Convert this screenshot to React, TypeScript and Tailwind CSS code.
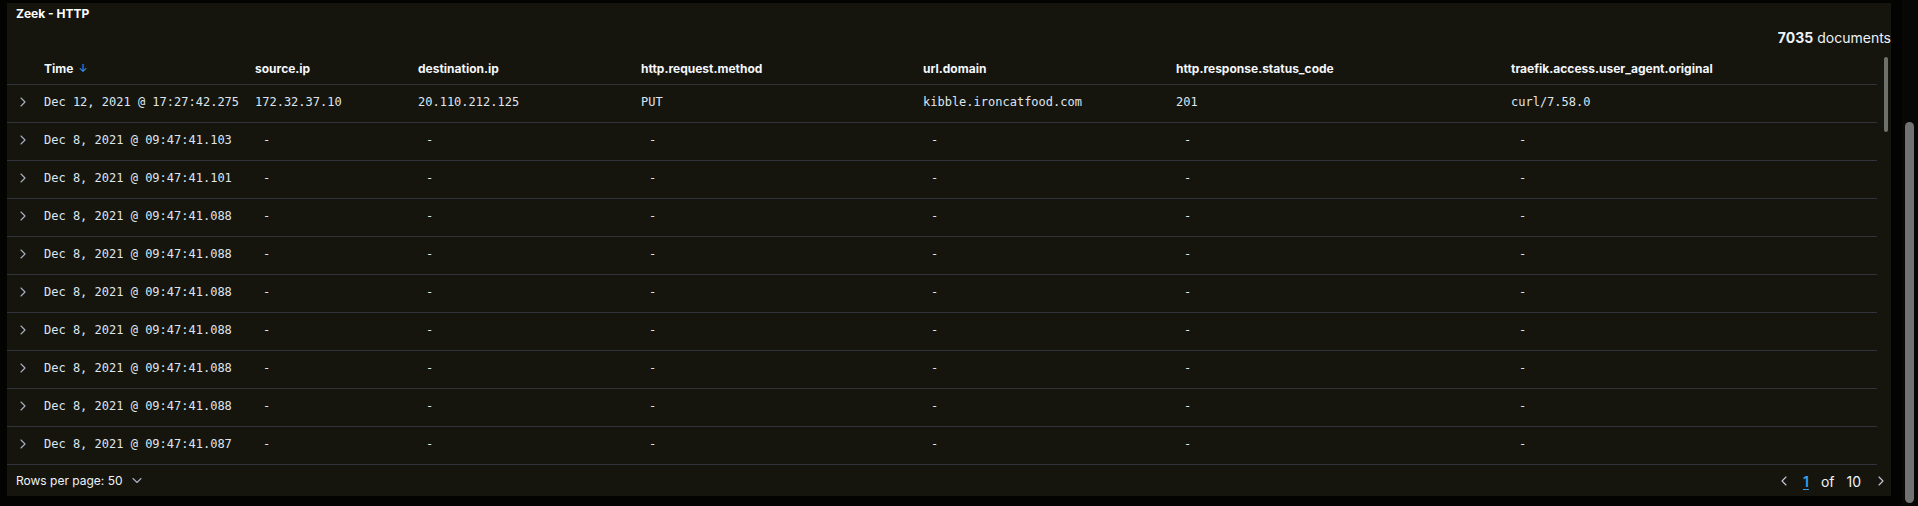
import React from "react";

const cols = [
  "w-[37px]",
  "w-[211px]",
  "w-[163px]",
  "w-[223px]",
  "w-[282px]",
  "w-[253px]",
  "w-[335px]",
  "w-[366px]",
];

const headers = [
  "source.ip",
  "destination.ip",
  "http.request.method",
  "url.domain",
  "http.response.status_code",
  "traefik.access.user_agent.original",
];

const rows: { time: string; vals: string[] | null }[] = [
  {
    time: "Dec 12, 2021 @ 17:27:42.275",
    vals: ["172.32.37.10", "20.110.212.125", "PUT", "kibble.ironcatfood.com", "201", "curl/7.58.0"],
  },
  { time: "Dec 8, 2021 @ 09:47:41.103", vals: null },
  { time: "Dec 8, 2021 @ 09:47:41.101", vals: null },
  { time: "Dec 8, 2021 @ 09:47:41.088", vals: null },
  { time: "Dec 8, 2021 @ 09:47:41.088", vals: null },
  { time: "Dec 8, 2021 @ 09:47:41.088", vals: null },
  { time: "Dec 8, 2021 @ 09:47:41.088", vals: null },
  { time: "Dec 8, 2021 @ 09:47:41.088", vals: null },
  { time: "Dec 8, 2021 @ 09:47:41.088", vals: null },
  { time: "Dec 8, 2021 @ 09:47:41.087", vals: null },
];

const Chevron = ({ dir }: { dir: "right" | "left" | "down" }) => {
  const d =
    dir === "right" ? "M2 1 L6 5 L2 9" : dir === "left" ? "M6 1 L2 5 L6 9" : "M1 2.5 L5 6.5 L9 2.5";
  return (
    <svg width={dir === "down" ? 10 : 8} height={10} viewBox={dir === "down" ? "0 0 10 10" : "0 0 8 10"} fill="none">
      <path d={d} stroke="currentColor" strokeWidth="1.1" strokeLinecap="round" strokeLinejoin="round" />
    </svg>
  );
};

export default function App() {
  const mono = { fontFamily: '"DejaVu Sans Mono", "Liberation Mono", monospace' };
  return (
    <div
      className="flex h-[506px] w-[1918px] overflow-hidden bg-[#030302] text-[#dfe5ef]"
      style={{ fontFamily: 'Inter, "Noto Sans", sans-serif' }}
    >
      <div className="w-[7px] shrink-0" />
      <div className="mt-[3px] flex h-[493px] w-[1884px] shrink-0 flex-col bg-[#15150e]">
        <div className="flex h-[22px] items-center px-[9px] text-[12px] font-bold text-white">Zeek - HTTP</div>
        <div className="flex h-[24px] items-center justify-end text-[14px] text-[#eef2f7]">
          <span className="font-bold">7035</span>
          <span className="ml-[4px]">documents</span>
        </div>
        <div className="relative h-[417px] overflow-hidden">
          <div className="w-[1870px]">
            <div className="flex h-[36px] items-center border-b border-[#31343d] pt-[4px] text-[12px] font-bold text-[#f3f6fa]">
              <div className={cols[0]} />
              <div className={`${cols[1]} flex items-center gap-[5px]`}>
                <span>Time</span>
                <span className="text-[11px] font-normal text-[#36a2ef]">↓</span>
              </div>
              {headers.map((h, i) => (
                <div key={h} className={cols[i + 2]}>
                  {h}
                </div>
              ))}
            </div>
            {rows.map((r, ri) => (
              <div
                key={ri}
                className="flex h-[38px] items-center border-b border-[#31343d] pb-[3px] text-[12px]"
                style={mono}
              >
                <div className={`${cols[0]} flex pl-[12px] text-[#aab2c0]`}>
                  <Chevron dir="right" />
                </div>
                <div className={cols[1]}>{r.time}</div>
                {r.vals
                  ? r.vals.map((v, i) => (
                      <div key={i} className={cols[i + 2]}>
                        {v}
                      </div>
                    ))
                  : headers.map((_, i) => (
                      <div key={i} className={`${cols[i + 2]} pl-[8px]`}>
                        -
                      </div>
                    ))}
              </div>
            ))}
          </div>
          <div className="absolute left-[1877px] top-[8px] h-[75px] w-[4px] rounded-full bg-[#6e706a]" />
        </div>
        <div className="flex h-[30px] items-center justify-between pl-[9px] pr-[6px]">
          <div className="flex items-center gap-[9px] text-[12px] text-[#eef2f7]">
            <span>Rows per page: 50</span>
            <span className="text-[#aab2c0]">
              <Chevron dir="down" />
            </span>
          </div>
          <div className="flex items-center text-[14px] text-[#eef2f7]">
            <span className="text-[#c5cbd6]">
              <Chevron dir="left" />
            </span>
            <span className="ml-[15px] font-semibold text-[#36a2ef] underline underline-offset-2">1</span>
            <span className="ml-[12px]">of</span>
            <span className="ml-[12px]">10</span>
            <span className="ml-[16px] text-[#c5cbd6]">
              <Chevron dir="right" />
            </span>
          </div>
        </div>
      </div>
      <div className="w-[11px] shrink-0" />
      <div className="relative w-[16px] shrink-0 bg-[#070705]">
        <div className="absolute left-[3px] top-[122px] h-[381px] w-[9px] rounded-full bg-[#727272]" />
      </div>
    </div>
  );
}
